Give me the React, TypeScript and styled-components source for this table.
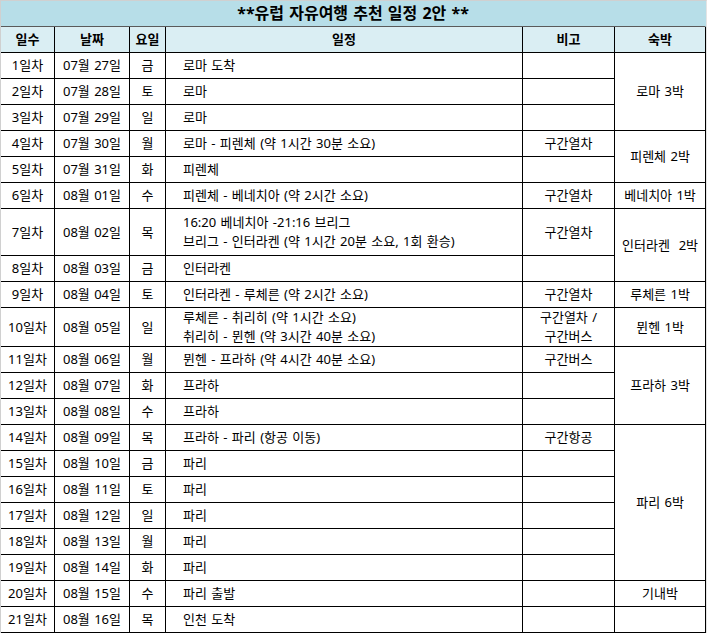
import React from "react";
import styled, { createGlobalStyle } from "styled-components";

const Global = createGlobalStyle`
  html, body { margin: 0; padding: 0; background: #fff; }
  body { font-family: "Noto Sans", "Noto Sans CJK KR", sans-serif; color: #000; }
`;

const Frame = styled.div`
  width: 705px;
  border-top: 1px solid #d0d0d0;
  border-left: 1px solid #d0d0d0;
  border-right: 1px solid #e4e4e4;
`;

const Table = styled.table`
  width: 705px;
  table-layout: fixed;
  border-collapse: separate;
  border-spacing: 0;
  font-size: 13px;
  line-height: 19px;
  word-spacing: 1px;
`;

const TitleCell = styled.th`
  box-sizing: border-box;
  height: 26px;
  padding: 0;
  background: #b7dee8;
  border-bottom: 1px solid #5a5a5a;
  border-right: 1px solid #b7dee8;
  font-size: 16px;
  font-weight: 700;
  text-align: center;
  vertical-align: middle;
  white-space: pre;
`;

const HeadCell = styled.th`
  box-sizing: border-box;
  height: 26px;
  padding: 0;
  background: #daeef3;
  border-right: 1px solid #000;
  border-bottom: 1px solid #000;
  font-weight: 700;
  text-align: center;
  vertical-align: middle;
`;

const Cell = styled.td<{ $h?: number; $left?: boolean }>`
  box-sizing: border-box;
  ${(p) => (p.$h ? `height: ${p.$h}px;` : "")}
  padding: ${(p) => (p.$left ? "0 0 0 17px" : "0")};
  border-right: 1px solid #000;
  border-bottom: 1px solid #000;
  text-align: ${(p) => (p.$left ? "left" : "center")};
  vertical-align: middle;
  white-space: pre;
  overflow: hidden;
`;

type Row = {
  day: string;
  date: string;
  dow: string;
  plan: string;
  note: string;
  h: number;
  stay?: { text: string; span: number };
};

const rows: Row[] = [
  { day: "1일차", date: "07월 27일", dow: "금", plan: "로마 도착", note: "", h: 26, stay: { text: "로마 3박", span: 3 } },
  { day: "2일차", date: "07월 28일", dow: "토", plan: "로마", note: "", h: 26 },
  { day: "3일차", date: "07월 29일", dow: "일", plan: "로마", note: "", h: 26 },
  { day: "4일차", date: "07월 30일", dow: "월", plan: "로마 - 피렌체 (약 1시간 30분 소요)", note: "구간열차", h: 26, stay: { text: "피렌체 2박", span: 2 } },
  { day: "5일차", date: "07월 31일", dow: "화", plan: "피렌체", note: "", h: 26 },
  { day: "6일차", date: "08월 01일", dow: "수", plan: "피렌체 - 베네치아 (약 2시간 소요)", note: "구간열차", h: 26, stay: { text: "베네치아 1박", span: 1 } },
  { day: "7일차", date: "08월 02일", dow: "목", plan: "16:20 베네치아 -21:16 브리그\n브리그 - 인터라켄 (약 1시간 20분 소요, 1회 환승)", note: "구간열차", h: 47, stay: { text: "인터라켄  2박", span: 2 } },
  { day: "8일차", date: "08월 03일", dow: "금", plan: "인터라켄", note: "", h: 26 },
  { day: "9일차", date: "08월 04일", dow: "토", plan: "인터라켄 - 루체른 (약 2시간 소요)", note: "구간열차", h: 26, stay: { text: "루체른 1박", span: 1 } },
  { day: "10일차", date: "08월 05일", dow: "일", plan: "루체른 - 취리히 (약 1시간 소요)\n취리히 - 뮌헨 (약 3시간 40분 소요)", note: "구간열차 /\n구간버스", h: 39, stay: { text: "뮌헨 1박", span: 1 } },
  { day: "11일차", date: "08월 06일", dow: "월", plan: "뮌헨 - 프라하 (약 4시간 40분 소요)", note: "구간버스", h: 26, stay: { text: "프라하 3박", span: 3 } },
  { day: "12일차", date: "08월 07일", dow: "화", plan: "프라하", note: "", h: 26 },
  { day: "13일차", date: "08월 08일", dow: "수", plan: "프라하", note: "", h: 26 },
  { day: "14일차", date: "08월 09일", dow: "목", plan: "프라하 - 파리 (항공 이동)", note: "구간항공", h: 26, stay: { text: "파리 6박", span: 6 } },
  { day: "15일차", date: "08월 10일", dow: "금", plan: "파리", note: "", h: 26 },
  { day: "16일차", date: "08월 11일", dow: "토", plan: "파리", note: "", h: 26 },
  { day: "17일차", date: "08월 12일", dow: "일", plan: "파리", note: "", h: 26 },
  { day: "18일차", date: "08월 13일", dow: "월", plan: "파리", note: "", h: 26 },
  { day: "19일차", date: "08월 14일", dow: "화", plan: "파리", note: "", h: 26 },
  { day: "20일차", date: "08월 15일", dow: "수", plan: "파리 출발", note: "", h: 26, stay: { text: "기내박", span: 1 } },
  { day: "21일차", date: "08월 16일", dow: "목", plan: "인천 도착", note: "", h: 26, stay: { text: "", span: 1 } },
];

const widths = [54, 75, 36, 357, 92, 91];

export default function App() {
  return (
    <>
      <Global />
      <Frame>
        <Table>
          <colgroup>
            {widths.map((w, i) => (
              <col key={i} style={{ width: w }} />
            ))}
          </colgroup>
          <thead>
            <tr>
              <TitleCell colSpan={6}>{"**유럽 자유여행 추천 일정 2안 **"}</TitleCell>
            </tr>
            <tr>
              <HeadCell>일수</HeadCell>
              <HeadCell>날짜</HeadCell>
              <HeadCell>요일</HeadCell>
              <HeadCell>일정</HeadCell>
              <HeadCell>비고</HeadCell>
              <HeadCell>숙박</HeadCell>
            </tr>
          </thead>
          <tbody>
            {rows.map((r) => (
              <tr key={r.day}>
                <Cell $h={r.h}>{r.day}</Cell>
                <Cell $h={r.h}>{r.date}</Cell>
                <Cell $h={r.h}>{r.dow}</Cell>
                <Cell $h={r.h} $left>
                  {r.plan}
                </Cell>
                <Cell $h={r.h}>{r.note}</Cell>
                {r.stay && <Cell rowSpan={r.stay.span}>{r.stay.text}</Cell>}
              </tr>
            ))}
          </tbody>
        </Table>
      </Frame>
    </>
  );
}
